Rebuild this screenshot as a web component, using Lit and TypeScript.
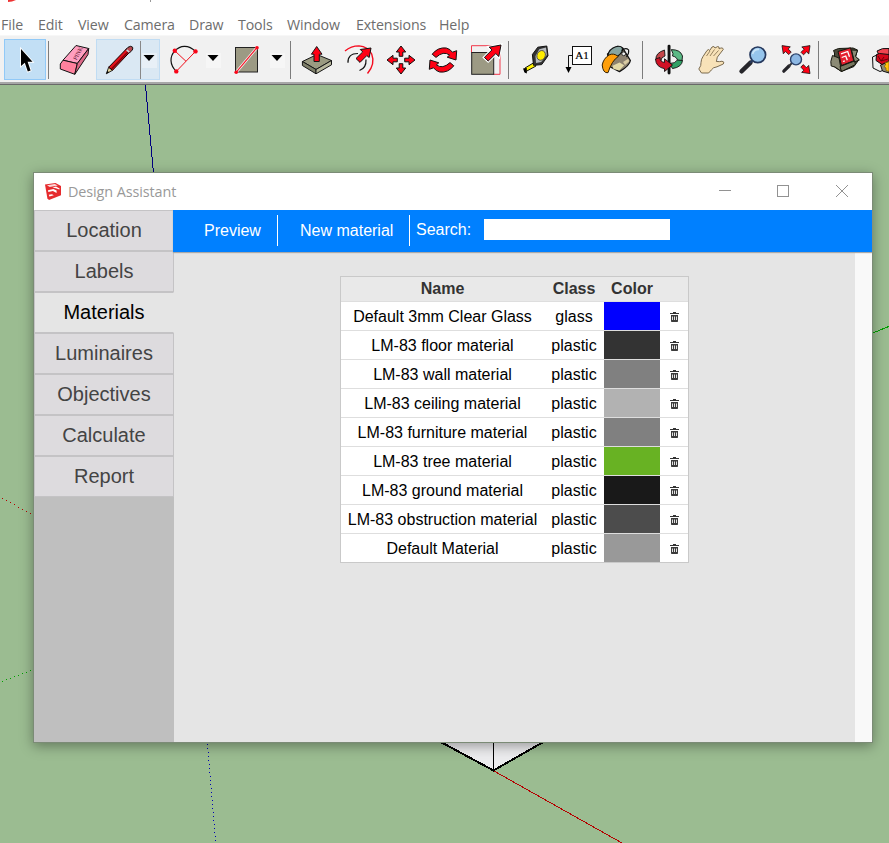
import { LitElement, html, svg, css } from "lit";
import { customElement } from "lit/decorators.js";

type Tool = { x: number; w: number; art: unknown; cls?: string };

const menu = [
  { label: "File", w: 37 },
  { label: "Edit", w: 40 },
  { label: "View", w: 46 },
  { label: "Camera", w: 65 },
  { label: "Draw", w: 49 },
  { label: "Tools", w: 49 },
  { label: "Window", w: 69 },
  { label: "Extensions", w: 83 },
  { label: "Help", w: 40 },
];

const drop = (x: number) => svg`
  <rect x=${x - 7} y="53" width="15" height="15" fill="#f6f6f6"/>
  <path d="M${x - 5.5} 55h11l-5.5 6z" fill="#000"/>`;
const sep = (x: number) => svg`<rect x=${x} y="41" width="1" height="38" fill="#7c7c7c"/>`;

const tools: Tool[] = [
  { x: 4, w: 42, cls: "selected", art: svg`<path d="M21 49V66L24.8 62.8L27.8 71.5L30.6 70.4L27.6 61.8H32.5Z" fill="#000" stroke="#fff" stroke-width="1.8" paint-order="stroke"/>` },
  { x: 46, w: 8, art: sep(48) },
  { x: 54, w: 42, art: svg`<g stroke="#111" stroke-width="1" stroke-linejoin="round">
    <path d="M76 45.5L88.7 48.5L77.3 63.5L63 60.2Z" fill="#ff9fc0"/>
    <path d="M63 60.2L77.3 63.5L74.8 74.3L60.3 69V64Z" fill="#ff819d"/>
    <path d="M88.7 48.5L88 54.5L74.8 74.3L77.3 63.5Z" fill="#dd6a88"/></g>
    <text x="0" y="0" font-size="6" font-family="Liberation Serif, serif" fill="#53112a" transform="translate(76.5 60.5) rotate(-62)">PINK</text>` },
  { x: 96, w: 64, cls: "hot", art: svg`<path d="M106.3 73.8L108.7 67.2L112.5 70.3Z" fill="#e8d79b" stroke="#111" stroke-width=".9"/>
    <path d="M106.3 73.8L107.5 70.8L109 72.2Z" fill="#000"/>
    <path d="M108.7 67.2L126.5 48.8L130 51.8L112.5 70.3Z" fill="#e4101a" stroke="#160000" stroke-width="1"/>
    <path d="M111.5 69L129 50.7" stroke="#7d0008" stroke-width="1.3"/>
    <path d="M126 49.3L128 47.3Q131 45.3 132.6 47.2Q133.4 49 131.7 50.8L129.5 52.8Z" fill="#b94a4f" stroke="#111" stroke-width="1"/>
    <path d="M126.6 49.8L129.2 52.1" stroke="#cfd3dc" stroke-width="1.6"/>
    <rect x="140" y="41" width="1" height="38" fill="#888"/><rect x="142" y="53" width="15" height="15" fill="#e8f0f7"/><path d="M143.5 55h11l-5.5 6z"/>` },
  { x: 160, w: 64, art: svg`<path d="M195.5 51.4C188 44 180 45.5 174.8 50.8C169.5 56.5 169.5 65 176.3 71.4" fill="none" stroke="#111" stroke-width="1.2"/>
    <path d="M195.5 51.4L176.3 71.4M174.8 50.8L186 61.3" stroke="#f0101c" stroke-width="1"/>
    <g fill="#f90518"><circle cx="174.8" cy="50.8" r="2.2"/><circle cx="195.5" cy="51.4" r="2.2"/><circle cx="176.3" cy="71.4" r="2.2"/></g>${drop(213)}` },
  { x: 224, w: 62, art: svg`<rect x="235.5" y="47.5" width="22" height="24.5" fill="#9c9a84" stroke="#222"/>
    <path d="M236.3 72.2L256.8 47.8" stroke="#fff" stroke-width="2.6"/><path d="M236.3 72.2L256.8 47.8" stroke="#f21c2d" stroke-width="1.2"/>
    <g fill="#f90518"><circle cx="236.2" cy="72.3" r="1.8"/><circle cx="257" cy="47.7" r="1.8"/></g>${drop(277)}` },
  { x: 286, w: 10, art: sep(290) },
  { x: 296, w: 42, art: svg`<g stroke="#161616" stroke-width="1" stroke-linejoin="round"><path d="M302.4 61.5L317 54.5L331.5 60.5L316 69.5Z" fill="#9a9a81"/>
    <path d="M302.4 61.5L316 69.5V73.8L302.4 65.5Z" fill="#7f806a"/><path d="M331.5 60.5V64.8L316 73.8V69.5Z" fill="#b7b79c"/>
    <path d="M316.7 46.5L322 54.2H319.3V61.5H314V54.2H311.4Z" fill="#ff0014"/></g>` },
  { x: 338, w: 42, art: svg`<path d="M345 51Q351 46 359 45.9Q368 46.5 371.7 54Q375.5 64 367.5 73.5" stroke="#f50d20" stroke-width="1.4" fill="none"/>
    <path d="M348 62.8Q347.5 53.5 358 53.5M359.5 70.5Q366.5 68 366 59.5" stroke="#111" stroke-width="1.2" fill="none"/>
    <path d="M371 48L369.2 57.5L366.8 55.6L360 62.4L356 58.5L362.7 51.9L360.3 49.5Z" fill="#ff0014" stroke="#111" stroke-width="1"/>` },
  { x: 380, w: 42, art: svg`${[0, 90, 180, 270].map((a) => svg`<path transform="rotate(${a} 401 60)" d="M401 46L405.7 52H402.8V56.3H399.2V52H396.3Z" fill="#ff0014" stroke="#111" stroke-width="1"/>`)}` },
  { x: 422, w: 42, art: svg`${[0, 180].map((a) => svg`<path transform="rotate(${a} 443 60)" d="M432.2 54.2Q438 46.9 446.3 48Q450.3 49 452.4 52.2L456.7 50.7L456 60L447.2 57.2L449.6 55.1Q443.5 50.5 436 57.4Z" fill="#ff0014" stroke="#111" stroke-width="1"/>`)}` },
  { x: 464, w: 40, art: svg`<path d="M471.5 45.7H500V74.3H493" fill="none" stroke="#f1384a"/><path d="M471.5 45.7V53" stroke="#f1384a"/><rect x="471.7" y="52.5" width="22" height="21.8" fill="#9c9a84" stroke="#222"/>
    <path d="M501 45L498.8 56.5L495.8 53.6L488.2 61L484.4 57.4L492 49.9L489.2 47.2Z" fill="#ff0014" stroke="#fff" stroke-width="3"/>
    <path d="M501 45L498.8 56.5L495.8 53.6L488.2 61L484.4 57.4L492 49.9L489.2 47.2Z" fill="#ff0014" stroke="#111" stroke-width="1"/>` },
  { x: 504, w: 10, art: sep(508) },
  { x: 514, w: 42, art: svg`<path d="M525 68L534 62.6L536 66L525 72Z" fill="#fff200" stroke="#111" stroke-width="1"/><path d="M523 68.5L526.8 68V73.5L524.5 72.5Z" fill="#000"/>
    <path d="M532.4 54.5L537.8 47.2L546.8 46L548 55.8L541.7 64.6L533.5 65.3Z" fill="#333" stroke="#111" stroke-width="1"/>
    <path d="M535.5 56L539.3 49.2L546 47.6L546.8 55L541.2 62L536 63Z" fill="#b8bcc0"/>
    <ellipse cx="541.3" cy="55.3" rx="4.1" ry="5" fill="#ffed00" stroke="#444" stroke-width=".8" transform="rotate(25 541 55)"/>` },
  { x: 556, w: 42, art: svg`<rect x="572.5" y="46.5" width="19" height="18" fill="#fff" stroke="#111"/><text x="582" y="58.6" font-size="11" text-anchor="middle" font-family="Liberation Serif, serif" fill="#000" stroke="#000" stroke-width=".2">A1</text>
    <path d="M572 55.5H568.5V67" fill="none" stroke="#111"/><path d="M565.5 67H571.5L568.5 73Z"/>` },
  { x: 598, w: 40, art: svg`<path d="M607.5 54L617.5 46.3L622.8 48.2L630.4 60.5Q629.5 66 619.5 71.6L609.5 66.5Z" fill="#8d8270" stroke="#111" stroke-width="1.3" stroke-linejoin="round"/>
    <path d="M612.5 65.8L619.5 62.5L624.2 65.2L619.3 70.5L613.5 69Z" fill="#e3d9a6"/><path d="M623 62L628.2 58.8L629.3 61.3L625 65Z" fill="#d8caa2"/>
    <ellipse cx="615.4" cy="52" rx="8" ry="4.6" fill="#87a5a1" stroke="#111" stroke-width="1.2" transform="rotate(-32 615.4 52)"/>
    <path d="M602.2 65Q603.5 58.5 609 55Q613.5 52.6 618.3 56.5Q611.8 60.5 608 72.7Q603 73.5 602.2 65Z" fill="#ff9f0a" stroke="#332000" stroke-width="1"/>
    <path d="M621.5 50.5Q625.5 47.2 628.6 49.8Q629.3 53 626.5 57" fill="none" stroke="#111" stroke-width="1.1"/>
    <circle cx="623.7" cy="53.8" r="1.9" fill="#eee" stroke="#111" stroke-width=".8"/>` },
  { x: 638, w: 10, art: sep(642) },
  { x: 648, w: 42, art: svg`<g stroke="#111" stroke-width=".9"><path d="M664.5 50Q655 53 656 60L660.8 61Q661 57 665 56Z" fill="#c4464a"/>
    <path d="M673 53.7L671.3 49.6Q680.5 49.6 682.5 56L682 61H677.5Q677.5 57 672.5 56Z" fill="#5bb985"/>
    <path d="M682.5 60.5Q682 67 672.5 68.6L669.5 63.5Q675 63.7 677.5 60Z" fill="#2fa065"/></g>
    <rect x="667.6" y="44.7" width="2.9" height="29.8" rx="1.4" fill="#111"/>
    <path d="M655.5 59Q655.8 67 664.5 68.7V71.5L672.5 65L664.5 58.8V62.5Q659.5 61.5 660 57.5Z" fill="#d01125" stroke="#111" stroke-width=".9"/>` },
  { x: 690, w: 42, art: svg`<path d="M698.8 69Q701.5 65.5 701 62.5Q701.2 59 703 56.5L707 50.5Q708.7 48.6 709.7 50.5L712 47Q714.3 45.5 715 48L717.5 46.6Q719.7 46.3 719.1 48.8Q722.8 46.8 723.3 49.4L717.3 57.2L716.4 61.5Q720 61.9 722 61.2Q725 61.7 723.3 64L717 66.8Q713 67.2 711.3 70L708.6 73H701.5Z" fill="#f8e2b8" stroke="#6c5b40" stroke-width=".9"/>
    <path d="M706.5 56L710 51M710 56L714.5 49.5M713.5 56L718.5 50.5" stroke="#7c6848" stroke-width=".8" fill="none"/>` },
  { x: 732, w: 42, art: svg`<path d="M741.5 71.3L750.5 62.7" stroke="#26252a" stroke-width="4.4" stroke-linecap="round"/><path d="M750 63L753 60" stroke="#27375a" stroke-width="2"/>
    <circle cx="757.8" cy="54.8" r="7.8" fill="#96c5ec" stroke="#26395e" stroke-width="1.7"/><path d="M752.5 54Q754 49 759 49.3" fill="none" stroke="#c9e4f8" stroke-width="1.8"/>` },
  { x: 774, w: 40, art: svg`<path d="M783.8 71.2L789 66" stroke="#26252a" stroke-width="3.2" stroke-linecap="round"/><path d="M789 66L792 63" stroke="#333" stroke-width="1.8"/>
    <circle cx="796" cy="59.4" r="5.5" fill="#8db8e4" stroke="#2b426b" stroke-width="1.4"/>
    ${[0, 90, 180].map((a) => svg`<path transform="rotate(${a} 796 59.6)" d="M782 45.6L790.3 46.8L788.2 49L791.2 52.1L788.7 54.6L785.6 51.5L783.3 53.8Z" fill="#ff0014" stroke="#111" stroke-width=".8"/>`)}` },
  { x: 814, w: 10, art: sep(818) },
  { x: 824, w: 42, art: svg`<g stroke="#17170f" stroke-width="1" stroke-linejoin="round"><path d="M834.5 53L833.5 50.5L838.5 48.5L853 48L857.5 50L855.5 57L859 59.5L854 66.5L841.5 71.5L834.5 67Z" fill="#4b4a3c"/>
    <path d="M832.5 55.5L839 58L841.5 71.5L835 67L831.2 66L830.8 61.5Z" fill="#8b8a75"/><path d="M851.5 50L857.5 50.3L855.5 56.3L859.3 60L854.5 62Z" fill="#8b8a75"/>
    <path d="M838 51.5L850.5 47.8L853.7 60.8L841.5 65.5Z" fill="#e5202f"/><path d="M840 66.5L854.5 61L855.5 64.5L841.5 71.5Z" fill="#77775f"/></g>
    <path d="M841 53.8L847.7 51.5L849.5 56.7M841.7 57.5L845.7 56L847.3 60.2M843 61.5L844.8 60.8" stroke="#fff" stroke-width="1.3" fill="none"/>` },
  { x: 866, w: 23, art: svg`<g stroke="#111" stroke-width="1" stroke-linejoin="round"><path d="M872.5 57L879 54L884 70L880 71.5L873 68Z" fill="#eee"/>
    <path d="M880.5 65L889 61V73L882.5 71Z" fill="#8d8b75"/>
    <path d="M877 51Q882 47.5 889 48.5V55H879Z" fill="#f04450"/><path d="M876.5 54.5L879.5 53.5L889 54.5V61L882 64.5L876 60.5Z" fill="#d3061a"/></g>
    <path d="M878 56L881 61L884 57M881 61L888 59" stroke="#5b0008" stroke-width=".9" fill="none"/>
    <path d="M889 62Q887.6 60.5 887.5 62.4L885 62.6L885.6 65L884 66.5L886 68L886 70.5L889 71.5Z" fill="#ffc30a" stroke="#6b4b00" stroke-width=".6"/>` },
];

const logo = html`<svg class="logo" viewBox="0 0 18 19" width="18" height="19">
  <path d="M1 2.5L11.5 .9L17 4V13.2L5 18L3.4 16.5Z" fill="#e62b2e"/>
  <path d="M3 3.2L10.8 2L13.8 3.4L5.7 5Z" fill="#fbdada"/><path d="M8.5 5.4L12 4.6L15.6 6.6L15.4 7.6L11.8 6.2Z" fill="#fff"/>
  <path d="M4 8.2L9.4 7L12.6 8.6V10.9L8.9 9L4.3 9.9Z" fill="#fff"/><path d="M4.8 12.8L8 12.2L9.8 13.2L5.4 14.6Z" fill="#fff"/></svg>`;

const trash = html`<svg class="trash" width="9" height="10" viewBox="0 0 9 10">
  <path d="M3 0H6V1H9V2H0V1H3Z" fill="#333"/><path d="M1 3H8V9.2Q8 10 7.2 10H1.8Q1 10 1 9.2Z" fill="#3c3c3c"/>
  <path d="M2.5 4.5V8M4.5 4.5V8M6.5 4.5V8" stroke="#e4e4e4" stroke-width="1"/></svg>`;

const tabs = ["Location", "Labels", "Materials", "Luminaires", "Objectives", "Calculate", "Report"];
const materials = [
  ["Default 3mm Clear Glass", "glass", "#0000ff"],
  ["LM-83 floor material", "plastic", "#333333"],
  ["LM-83 wall material", "plastic", "#808080"],
  ["LM-83 ceiling material", "plastic", "#b2b2b2"],
  ["LM-83 furniture material", "plastic", "#808080"],
  ["LM-83 tree material", "plastic", "#68b223"],
  ["LM-83 ground material", "plastic", "#191919"],
  ["LM-83 obstruction material", "plastic", "#4c4c4c"],
  ["Default Material", "plastic", "#999999"],
];

@customElement("design-dialog")
class DesignDialog extends LitElement {
  static styles = css`
    :host { display: flex; flex-direction: column; width: 838px; height: 569px; border: 1px solid #7b8b76; background: #e5e5e5; box-shadow: 0 3px 12px rgba(0, 0, 0, .36); box-sizing: content-box; font: 16px "Liberation Sans", Arial, sans-serif; }
    .title { height: 37px; background: #fff; display: flex; align-items: center; color: #999; flex: none; }
    .logo { margin-left: 10px; margin-right: 6px; }
    .caption { font: 14.4px/20px "Open Sans", "Noto Sans", sans-serif; letter-spacing: -.1px; flex: 1; padding-top: 1px; }
    .controls { display: block; }
    .body { flex: 1; display: flex; min-height: 0; }
    .side { width: 140px; background: #bfbfbf; flex: none; }
    .tab { box-sizing: border-box; height: 41px; border: 1px solid #c4c3c5; background: #dddbde; color: #444; font-size: 20px; line-height: 38px; text-align: center; }
    .tab.on { background: #e5e5e5; color: #000; border-right-color: #e5e5e5; }
    .main { flex: 1; min-width: 0; display: flex; flex-direction: column; }
    .bar { height: 42px; box-sizing: border-box; padding-top: 5px; margin-left: -1px; background: #0080ff; color: #fff; display: flex; align-items: flex-start; box-shadow: 0 1px 1px #a9a9a9; z-index: 1; flex: none; }
    .item { box-sizing: border-box; height: 31px; line-height: 31px; border-right: 1px solid #fff; white-space: nowrap; }
    .preview { width: 105px; padding-left: 31px; }
    .create { width: 132px; padding-left: 22px; }
    .search { padding-left: 6px; width: 74px; box-sizing: border-box; line-height: 29px; }
    .field { width: 186px; height: 21px; background: #fff; border: 0; padding: 0; margin: 4px 0 0; }
    .scroll { flex: 1; display: flex; }
    .page { flex: 1; padding: 24px 0 0 166px; }
    .track { width: 17px; background: #f9f9f9; }
    .table { width: 347px; border: 1px solid #c9c9c9; background: #fff; }
    .row { display: grid; grid-template: 28px / 203px 60px 56px 28px; line-height: 29px; border-top: 1px solid #dedede; text-align: center; color: #000; white-space: nowrap; }
    .head { grid-template-rows: 24px; line-height: 23px; border: 0; background: #e9e9e9; color: #333; font-weight: bold; }
    .trash { display: block; margin: 10px 0 0 10px; }
  `;
  render() {
    return html`
      <div class="title">${logo}<span class="caption">Design Assistant</span>
        <svg class="controls" width="154" height="37" viewBox="718 173 154 37" fill="none" stroke="#929292">
          <path d="M719 190.5H731"/><rect x="777.5" y="185.5" width="11" height="11"/><path d="M836 185L848 197M848 185L836 197"/>
        </svg></div>
      <div class="body">
        <nav class="side">${tabs.map((t) => html`<div class="tab ${t === "Materials" ? "on" : ""}">${t}</div>`)}</nav>
        <div class="main">
          <div class="bar"><div class="item preview">Preview</div><div class="item create">New material</div><label class="search" for="q">Search:</label><input id="q" class="field"></div>
          <div class="scroll"><div class="page"><div class="table">
            <div class="row head"><span>Name</span><span>Class</span><span>Color</span><span></span></div>
            ${materials.map(([n, c, col]) => html`<div class="row"><span>${n}</span><span>${c}</span><span style="background:${col}"></span><span>${trash}</span></div>`)}
          </div></div><div class="track"></div></div>
        </div>
      </div>`;
  }
}

const dots = (x0: number, y0: number, x1: number, y1: number, n: number, color: string) =>
  Array.from({ length: n }, (_, i) => svg`<rect x=${Math.round(x0 + ((x1 - x0) * i) / (n - 1))} y=${Math.round(y0 + ((y1 - y0) * i) / (n - 1))} width="1" height="1" fill=${color}/>`);

@customElement("app-root")
class AppRoot extends LitElement {
  static styles = css`
    :host { display: flex; flex-direction: column; width: 889px; height: 843px; overflow: hidden; background: #fff; }
    .menu { height: 35px; box-sizing: border-box; padding: 0 0 0 1px; display: flex; font: 14.2px/20px "Open Sans", "Noto Sans", sans-serif; letter-spacing: -.12px; color: #6d6d6d; position: relative; align-items: flex-start; flex: none; }
    .entry { margin-top: 15px; white-space: nowrap; flex: none; }
    .peek { position: absolute; left: 0; top: 0; }
    .tools { height: 47px; box-sizing: border-box; padding: 4px 0 0 4px; background: #f1f1f1; border-top: 1px solid #f7f7f7; display: flex; flex: none; align-items: flex-start; overflow: hidden; }
    .tool { display: block; flex: none; margin-top: -1px; }
    .selected { background: #c2dff5; box-shadow: inset 0 0 0 1px #91c9f7; }
    .hot { background: #dae8f3; box-shadow: inset 0 0 0 1px #c0dcf3; }
    .rule { height: 3px; box-sizing: border-box; background: #a7a7a7; border-bottom: 1px solid #696969; flex: none; }
    .canvas { flex: 1; position: relative; background: #9bbc91; overflow: hidden; }
    .scene { display: block; }
    design-dialog { position: absolute; left: 33px; top: 87px; }
  `;
  render() {
    return html`
      <div class="menu"><svg class="peek" width="160" height="3"><path d="M8 0H16L12 1.5L8 2Z" fill="#e33"/><path d="M150.5 0V2" stroke="#999"/></svg>
        ${menu.map((m) => html`<span class="entry" style="width:${m.w}px">${m.label}</span>`)}</div>
      <div class="tools">${tools.map((t) => html`<svg class="tool ${t.cls ?? ""}" width=${t.w} height="41" viewBox="${t.x} 39 ${t.w} 41">${t.art}</svg>`)}</div>
      <div class="rule"></div>
      <div class="canvas">
        <svg class="scene" width="889" height="758" viewBox="0 85 889 758" shape-rendering="crispEdges" fill="none">
          <path d="M145.5 85L153.5 173" stroke="#000080"/>
          ${dots(207, 744, 215, 840, 25, "#0000b4")}
          ${dots(2, 498, 30, 513, 8, "#b40000")}
          ${dots(2, 681, 30, 670, 8, "#00a000")}
          <path d="M872 333.3L889 326.4" stroke="#00a000"/>
          <path d="M438 740.5L493.5 771L546 740.5Z" fill="#ececee"/>
          <path d="M438 740.5L493.5 770.5L546 740.5" stroke="#000" stroke-width="2"/><path d="M493.5 741V770" stroke="#000"/>
          <path d="M494 771L622 843" stroke="#b40000"/>
        </svg>
        <design-dialog></design-dialog>
      </div>`;
  }
}
